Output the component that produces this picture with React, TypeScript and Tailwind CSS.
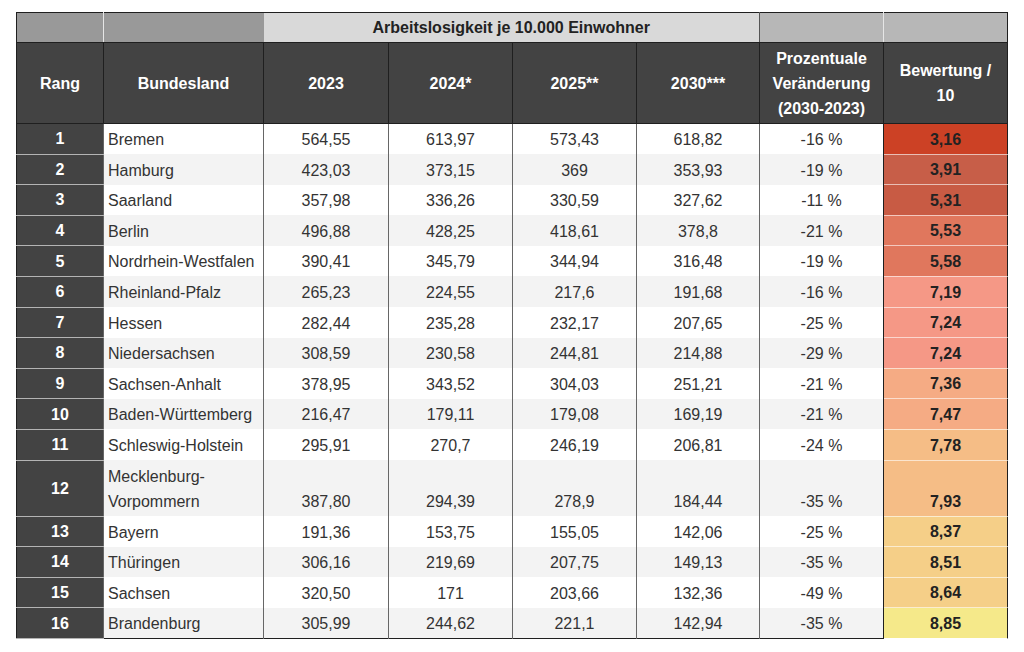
import React from "react";

type Row = {
  rang: number;
  land: string;
  v2023: string;
  v2024: string;
  v2025: string;
  v2030: string;
  change: string;
  score: string;
  color: string;
};

const rows: Row[] = [
  { rang: 1, land: "Bremen", v2023: "564,55", v2024: "613,97", v2025: "573,43", v2030: "618,82", change: "-16 %", score: "3,16", color: "bg-[#cc4125]" },
  { rang: 2, land: "Hamburg", v2023: "423,03", v2024: "373,15", v2025: "369", v2030: "353,93", change: "-19 %", score: "3,91", color: "bg-[#c75e48]" },
  { rang: 3, land: "Saarland", v2023: "357,98", v2024: "336,26", v2025: "330,59", v2030: "327,62", change: "-11 %", score: "5,31", color: "bg-[#c85b44]" },
  { rang: 4, land: "Berlin", v2023: "496,88", v2024: "428,25", v2025: "418,61", v2030: "378,8", change: "-21 %", score: "5,53", color: "bg-[#e0775d]" },
  { rang: 5, land: "Nordrhein-Westfalen", v2023: "390,41", v2024: "345,79", v2025: "344,94", v2030: "316,48", change: "-19 %", score: "5,58", color: "bg-[#e0775d]" },
  { rang: 6, land: "Rheinland-Pfalz", v2023: "265,23", v2024: "224,55", v2025: "217,6", v2030: "191,68", change: "-16 %", score: "7,19", color: "bg-[#f59886]" },
  { rang: 7, land: "Hessen", v2023: "282,44", v2024: "235,28", v2025: "232,17", v2030: "207,65", change: "-25 %", score: "7,24", color: "bg-[#f59886]" },
  { rang: 8, land: "Niedersachsen", v2023: "308,59", v2024: "230,58", v2025: "244,81", v2030: "214,88", change: "-29 %", score: "7,24", color: "bg-[#f59886]" },
  { rang: 9, land: "Sachsen-Anhalt", v2023: "378,95", v2024: "343,52", v2025: "304,03", v2030: "251,21", change: "-21 %", score: "7,36", color: "bg-[#f5ab84]" },
  { rang: 10, land: "Baden-Württemberg", v2023: "216,47", v2024: "179,11", v2025: "179,08", v2030: "169,19", change: "-21 %", score: "7,47", color: "bg-[#f5ab84]" },
  { rang: 11, land: "Schleswig-Holstein", v2023: "295,91", v2024: "270,7", v2025: "246,19", v2030: "206,81", change: "-24 %", score: "7,78", color: "bg-[#f5bd86]" },
  { rang: 12, land: "Mecklenburg-Vorpommern", v2023: "387,80", v2024: "294,39", v2025: "278,9", v2030: "184,44", change: "-35 %", score: "7,93", color: "bg-[#f5bd86]" },
  { rang: 13, land: "Bayern", v2023: "191,36", v2024: "153,75", v2025: "155,05", v2030: "142,06", change: "-25 %", score: "8,37", color: "bg-[#f5cf88]" },
  { rang: 14, land: "Thüringen", v2023: "306,16", v2024: "219,69", v2025: "207,75", v2030: "149,13", change: "-35 %", score: "8,51", color: "bg-[#f5cf88]" },
  { rang: 15, land: "Sachsen", v2023: "320,50", v2024: "171", v2025: "203,66", v2030: "132,36", change: "-49 %", score: "8,64", color: "bg-[#f5cf88]" },
  { rang: 16, land: "Brandenburg", v2023: "305,99", v2024: "244,62", v2025: "221,1", v2030: "142,94", change: "-35 %", score: "8,85", color: "bg-[#f5e98a]" },
];

const headCell =
  "border border-[#1f1f1f] bg-[#434343] text-white font-bold text-center align-middle leading-[25px] px-1";
const numCell = "border-x border-[#666] text-center align-bottom pb-[2px] px-1";

export default function App() {
  return (
    <div className="bg-white w-[1024px] h-[652px] pt-3 pl-4 font-['Liberation_Sans',Arial,sans-serif] text-[16px]">
      <table className="table-fixed border-collapse w-[991px] border border-[#1f1f1f]">
        <colgroup>
          <col className="w-[87px]" />
          <col className="w-[160px]" />
          <col className="w-[125px]" />
          <col className="w-[124px]" />
          <col className="w-[124px]" />
          <col className="w-[123px]" />
          <col className="w-[124px]" />
          <col className="w-[124px]" />
        </colgroup>
        <thead>
          <tr className="h-[30px]">
            <th className="bg-[#999999] border-t border-b border-l border-r border-[#1f1f1f] border-r-[#e6e6e6]" />
            <th className="bg-[#999999] border-t border-b border-[#1f1f1f]" />
            <th
              colSpan={4}
              className="bg-[#d9d9d9] border-t border-b border-r border-[#1f1f1f] border-r-[#555] text-[#222] font-bold text-center align-middle"
            >
              Arbeitslosigkeit je 10.000 Einwohner
            </th>
            <th className="bg-[#b7b7b7] border-t border-b border-r border-[#1f1f1f] border-r-[#e6e6e6]" />
            <th className="bg-[#b7b7b7] border-t border-b border-r border-[#1f1f1f]" />
          </tr>
          <tr className="h-[81px]">
            <th className={headCell}>Rang</th>
            <th className={headCell}>Bundesland</th>
            <th className={headCell}>2023</th>
            <th className={headCell}>2024*</th>
            <th className={headCell}>2025**</th>
            <th className={headCell}>2030***</th>
            <th className={headCell}>
              Prozentuale Veränderung (2030-2023)
            </th>
            <th className={headCell}>
              Bewertung /
              <br />
              10
            </th>
          </tr>
        </thead>
        <tbody>
          {rows.map((r, i) => (
            <tr
              key={r.rang}
              className={`${r.rang === 12 ? "h-[56px]" : "h-[30.6px]"} ${
                i % 2 === 0 ? "bg-white" : "bg-[#f3f3f3]"
              } text-[#333] leading-[25px]`}
            >
              <td className="bg-[#434343] text-white font-bold text-center align-middle border-l border-[#1f1f1f] border-b border-b-[#b4b4b4]">
                {r.rang}
              </td>
              <td className="border-x border-[#666] align-bottom pb-[2px] pl-[4px] pr-1">
                {r.land}
              </td>
              <td className={numCell}>{r.v2023}</td>
              <td className={numCell}>{r.v2024}</td>
              <td className={numCell}>{r.v2025}</td>
              <td className={numCell}>{r.v2030}</td>
              <td className="border-l border-[#666] border-r border-r-[#1f1f1f] text-center align-bottom pb-[2px] px-1">
                {r.change}
              </td>
              <td
                className={`${r.color} text-[#222] font-bold text-center align-bottom pb-[2px] border-r border-[#1f1f1f] border-b border-b-white/60`}
              >
                {r.score}
              </td>
            </tr>
          ))}
        </tbody>
      </table>
    </div>
  );
}
